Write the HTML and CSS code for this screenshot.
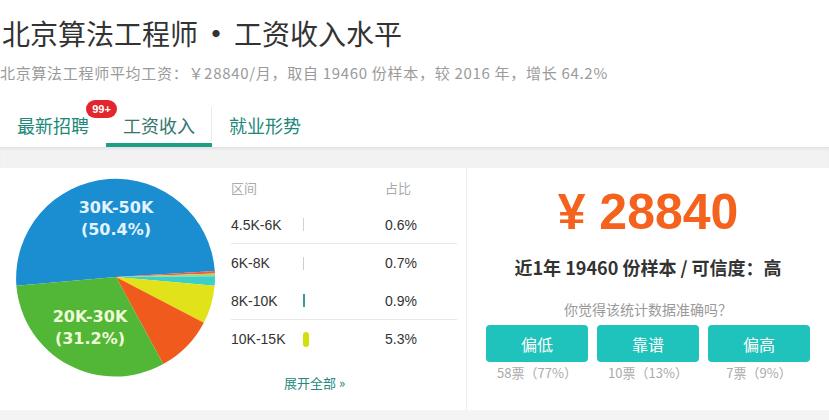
FILE: index.html
```html
<!DOCTYPE html>
<html lang="zh-CN">
<head>
<meta charset="utf-8">
<title>北京算法工程师 • 工资收入水平</title>
<link rel="stylesheet" href="styles.css">
</head>
<body>
<header class="head">
  <h1 class="title">北京算法工程师<span class="dot">•</span>工资收入水平</h1>
  <p class="subtitle">北京算法工程师平均工资：￥28840/月，取自 19460 份样本，较 2016 年，增长 64.2%</p>
  <nav class="tabs">
    <a class="tab">最新招聘<span class="badge">99+</span></a>
    <a class="tab active">工资收入</a>
    <a class="tab">就业形势</a>
  </nav>
</header>
<div class="band"></div>
<main class="cards">
  <section class="card left">
    <svg class="pie" width="202" height="202" viewBox="0 0 202 202">
      <path fill="#1b8dd1" d="M101,101 L1.377,109.63 A99,99 0 1 1 199.815,94.956 Z"/>
      <path fill="#ef5a4a" d="M101,101 L199.815,94.956 A99,99 0 0 1 199.94,97.545 Z"/>
      <path fill="#a8d86a" d="M101,101 L199.94,97.545 A99,99 0 0 1 199.996,100.136 Z"/>
      <path fill="#3ccfc8" d="M101,101 L199.996,100.136 A99,99 0 0 1 199.623,109.629 Z"/>
      <path fill="#e2e21a" d="M101,101 L199.623,109.629 A99,99 0 0 1 188.814,146.713 Z"/>
      <path fill="#f05a1c" d="M101,101 L188.814,146.713 A99,99 0 0 1 148.239,188.003 Z"/>
      <path fill="#52b636" d="M101,101 L148.239,188.003 A99,99 0 0 1 1.377,109.63 Z"/>
      <text class="plabel pl1" x="101" y="32">30K-50K</text>
      <text class="plabel pl1" x="101" y="54">(50.4%)</text>
      <text class="plabel pl2" x="75" y="141">20K-30K</text>
      <text class="plabel pl2" x="75" y="163">(31.2%)</text>
    </svg>
    <div class="dist">
      <div class="row headrow"><span>区间</span><span></span><span>占比</span></div>
      <div class="row line"><span>4.5K-6K</span><span><i class="bar b1"></i></span><span>0.6%</span></div>
      <div class="row"><span>6K-8K</span><span><i class="bar b2"></i></span><span>0.7%</span></div>
      <div class="row line"><span>8K-10K</span><span><i class="bar b3"></i></span><span>0.9%</span></div>
      <div class="row"><span>10K-15K</span><span><i class="bar b4"></i></span><span>5.3%</span></div>
      <a class="more">展开全部 »</a>
    </div>
  </section>
  <section class="card right">
    <div class="price">¥ 28840</div>
    <div class="sample">近1年 19460 份样本 / 可信度：高</div>
    <div class="question">你觉得该统计数据准确吗？</div>
    <div class="votes">
      <div class="vote"><button class="vbtn">偏低</button><span class="vcount">58票（77%）</span></div>
      <div class="vote"><button class="vbtn">靠谱</button><span class="vcount">10票（13%）</span></div>
      <div class="vote"><button class="vbtn">偏高</button><span class="vcount">7票（9%）</span></div>
    </div>
  </section>
</main>
<div class="foot"></div>
</body>
</html>
```

FILE: styles.css
```css
* { box-sizing: border-box; }
html, body { margin: 0; padding: 0; }
body {
  width: 829px;
  height: 420px;
  overflow: hidden;
  background: #fff;
  font-family: "Noto Sans CJK SC", "Liberation Sans", sans-serif;
  color: #333;
}
.head { padding: 0; }
.title {
  margin: 13px 0 0 2px;
  font-size: 28px;
  line-height: 40px;
  font-weight: normal;
  color: #333;
}
.dot {
  display: inline-block;
  margin: 0 4px;
  font-weight: bold;
}
.subtitle {
  margin: 10px 0 0 0;
  font-size: 15px;
  letter-spacing: 0.7px;
  line-height: 20px;
  color: #9a9a9a;
}
.tabs {
  display: flex;
  margin-top: 20px;
}
.tab {
  position: relative;
  padding: 4px 17px 0;
  line-height: 36px;
  height: 44px;
  font-size: 18px;
  color: #21887a;
  border-bottom: 4px solid transparent;
}
.tab.active {
  color: #36756d;
  border-bottom-color: #1f9e86;
}
.tab.active::after {
  content: "";
  position: absolute;
  right: 0;
  top: 4px;
  height: 34px;
  border-right: 1px solid #eaeaea;
}
.badge {
  position: absolute;
  left: 86px;
  top: -3px;
  width: 31px;
  height: 18px;
  border-radius: 9px;
  background: #e3262d;
  color: #fff;
  font-family: "Liberation Sans", sans-serif;
  font-weight: bold;
  font-size: 11px;
  line-height: 18px;
  text-align: center;
}
.band {
  height: 21px;
  background: #f2f2f2;
  border-top: 1px solid #e2e2e2;
  box-shadow: inset 0 2px 2px rgba(0,0,0,0.04);
}
.cards {
  display: flex;
  height: 242px;
}
.card { background: #fff; height: 100%; }
.card.left {
  width: 466px;
  display: flex;
  align-items: flex-start;
}
.pie {
  display: block;
  margin: 8px 0 0 15px;
}
.plabel {
  font-family: "DejaVu Sans", sans-serif;
  font-weight: bold;
  font-size: 16px;
  text-anchor: middle;
  dominant-baseline: middle;
}
.pl1 { fill: #e3f3ff; }
.pl2 { fill: #effad8; }
.dist {
  margin-left: 14px;
  width: 226px;
  font-family: "Liberation Sans", "Noto Sans CJK SC", sans-serif;
}
.row {
  display: grid;
  grid-template-columns: 72px 82px 1fr;
  align-items: center;
  height: 38px;
  font-size: 14px;
  color: #333;
}
.row.line { border-bottom: 1px solid #e8e8e8; }
.headrow { color: #aaa; font-size: 13px; font-family: "Noto Sans CJK SC", sans-serif; }
.bar { display: block; }
.b1 { width: 1px; height: 13px; background: #cfd9bd; }
.b2 { width: 1px; height: 13px; background: #c6d3c6; }
.b3 { width: 2px; height: 13px; background: #3a9b9b; }
.b4 { width: 6px; height: 15px; border-radius: 3px; background: #d3df0a; }
.more {
  display: block;
  margin: 15px 0 0 53px;
  font-size: 13px;
  line-height: 20px;
  color: #24887c;
  font-family: "Noto Sans CJK SC", sans-serif;
}
.card.right {
  flex: 1;
  border-left: 1px solid #eeeeee;
  display: flex;
  flex-direction: column;
  align-items: center;
}
.price {
  margin-top: 14px;
  font-family: "Liberation Sans", sans-serif;
  font-weight: bold;
  font-size: 50px;
  line-height: 60px;
  color: #f4621d;
}
.sample {
  margin-top: 13px;
  font-size: 18px;
  line-height: 24px;
  font-weight: bold;
  color: #333;
}
.question {
  margin-top: 20px;
  font-size: 14px;
  line-height: 20px;
  color: #999;
}
.votes {
  display: flex;
  gap: 9px;
  margin-top: 6px;
}
.vote {
  display: flex;
  flex-direction: column;
  align-items: center;
}
.vbtn {
  width: 102px;
  height: 37px;
  border: 0;
  border-radius: 4px;
  background: #1fc3bb;
  color: #fff;
  font-family: "Noto Sans CJK SC", sans-serif;
  font-size: 16px;
  padding: 0;
}
.vcount {
  margin-top: 2px;
  font-size: 13px;
  line-height: 18px;
  color: #aaa;
}
.foot {
  height: 10px;
  background: #f4f4f4;
}
```
